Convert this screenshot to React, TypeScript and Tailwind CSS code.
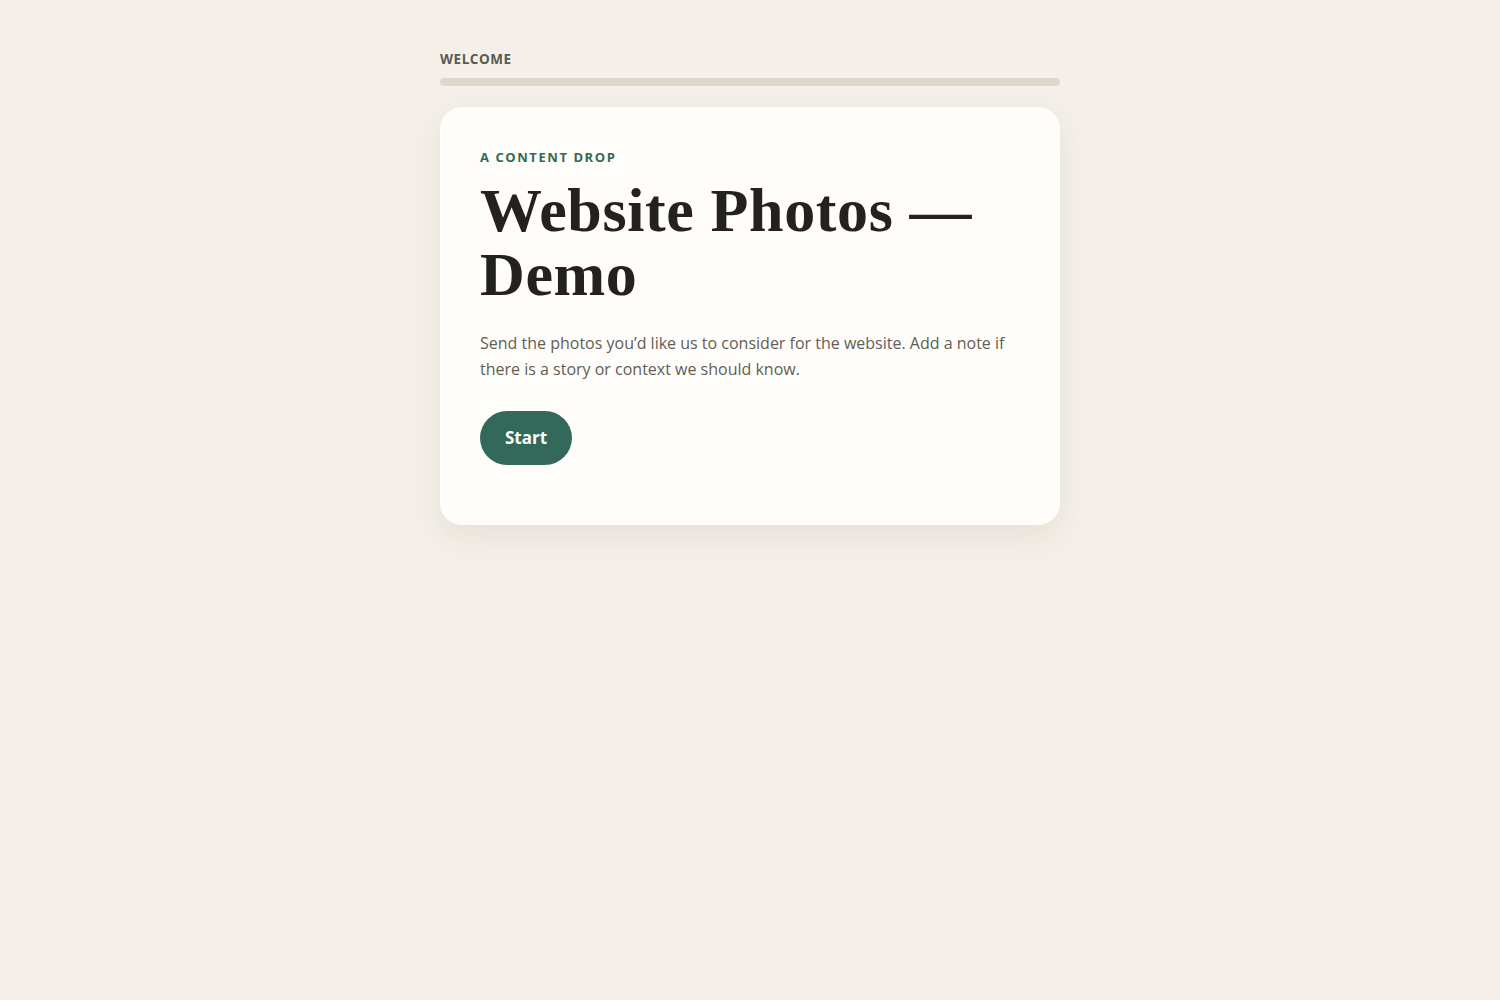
import React from "react";

export default function App() {
  return (
    <div className="min-h-screen w-full bg-[#f4f0e9]" style={{ fontFamily: '"Open Sans", "Noto Sans", sans-serif' }}>
      <div className="mx-auto w-[620px] pt-[50px]">
        <div className="text-[13.5px] font-bold uppercase tracking-[0.04em] text-[#5b5a52] leading-[18px]">Welcome</div>
        <div className="mt-[10px] h-2 w-full rounded-full bg-[#dcd8cb]" />
        <div className="mt-[21px] rounded-[22px] bg-[#fefdf9] px-10 pt-[41px] pb-[60px] shadow-[0_12px_32px_rgba(60,50,30,0.08)]">
          <div className="text-[13px] font-bold uppercase tracking-[0.12em] text-[#2f6a5b] leading-[18px]">A content drop</div>
          <h1
            className="mt-[12px] text-[62px] font-bold leading-[64px] text-[#23221f] tracking-[0.01em]"
            style={{ fontFamily: '"Liberation Serif", "Times New Roman", serif' }}
          >
            Website Photos — Demo
          </h1>
          <p className="mt-[24px] text-[16px] leading-[26px] text-[#5f5d57]">
            Send the photos you’d like us to consider for the website. Add a note if there is a story or context we should know.
          </p>
          <button className="mt-[29px] h-[54px] rounded-full bg-[#33695a] px-[25px] text-[17px] font-bold text-white">
            Start
          </button>
        </div>
      </div>
    </div>
  );
}
